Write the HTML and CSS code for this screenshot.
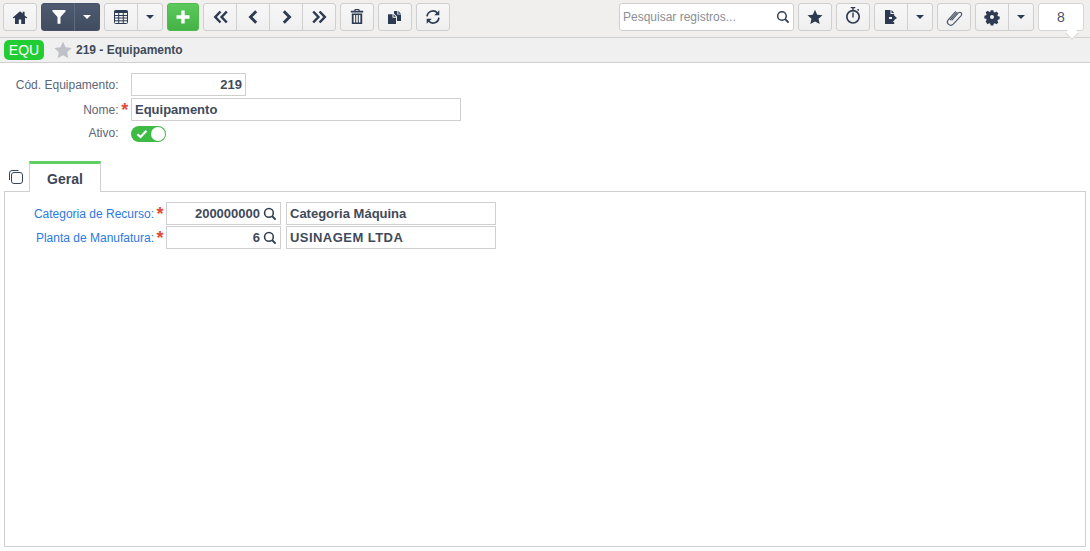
FILE: index.html
```html
<!DOCTYPE html>
<html lang="pt-BR">
<head>
<meta charset="utf-8">
<title>219 - Equipamento</title>
<link rel="stylesheet" href="styles.css">
</head>
<body>
<header class="toolbar">
  <button class="btn"><svg class="ic" viewBox="0 0 16 16"><path d="M8 2.200 0.800 8.600l.9 1 1.300-1.100V15h3.800V10.600h2.400V15H13V8.500l1.300 1.100.9-1L12.600 6.400V2.800h-2v1.800z"/></svg></button>
  <div class="group dark">
    <button class="btn w33"><svg class="ic" viewBox="0 0 16 16"><path class="white" d="M2.500 1h13v1.600L10.500 8v6.800H7.500V8L2.500 2.600z"/></svg></button>
    <button class="btn caret-btn"><span class="caret"></span></button>
  </div>
  <div class="group">
    <button class="btn w33"><svg class="ic" viewBox="0 0 16 16"><rect x="1.500" y="1.500" width="13" height="13" rx="1" fill="none" class="line1"/><path d="M1.500 1.500h13v2.500h-13z"/><path fill="none" class="line1" d="M1.500 6.500h13M1.500 9h13M1.500 11.800h13M5.700 4v10M10.300 4v10"/></svg></button>
    <button class="btn caret-btn"><span class="caret"></span></button>
  </div>
  <button class="btn green"><svg class="ic" viewBox="0 0 16 16"><path class="white" d="M6.300 1.500h3.400v4.800h4.800v3.400H9.700v4.800H6.300V9.700H1.500V6.300h4.800z"/></svg></button>
  <div class="group">
    <button class="btn w33"><svg class="ic" viewBox="0 0 16 16"><path fill="none" class="chev" d="M8.500 2.500 3.300 8l5.200 5.500M14.800 2.500 9.600 8l5.200 5.500"/></svg></button>
    <button class="btn w33"><svg class="ic" viewBox="0 0 16 16"><path fill="none" class="chev3" d="M11.200 2.300 5.500 8l5.700 5.700"/></svg></button>
    <button class="btn w33"><svg class="ic" viewBox="0 0 16 16"><path fill="none" class="chev3" d="M5.800 2.300 11.500 8l-5.700 5.700"/></svg></button>
    <button class="btn w33"><svg class="ic" viewBox="0 0 16 16"><path fill="none" class="chev" d="M2.200 2.500 7.400 8l-5.200 5.500M8.600 2.500 13.800 8l-5.200 5.500"/></svg></button>
  </div>
  <button class="btn"><svg class="ic" viewBox="0 0 16 16"><path fill-rule="evenodd" d="M5.800 0h4.400l.6 1.800h3.400v1.600H1.800V1.800h3.400zM6.700 1l-.2.800h3l-.2-.8zM2.800 4.400h10.400V15H2.800zM4.600 6v7.400h1.600V6zm2.600 0v7.400h1.600V6zm2.600 0v7.400h1.600V6z"/></svg></button>
  <button class="btn"><svg class="ic" viewBox="0 0 16 16"><path d="M1 5.200h4.500v3.600H9V15H1zM6.500 5.200 9 7.800H6.500zM7 2h3.300v3.500h3.700V12h-4V7.500L7 4.500zM11.300 2 14 4.700h-2.700z"/></svg></button>
  <button class="btn"><svg class="ic" viewBox="0 0 16 16"><path fill="none" class="line" d="M2.100 7.400A5.900 5.900 0 0 1 12.400 4M13.900 8.600A5.900 5.900 0 0 1 3.600 12"/><path d="M14.300 1.200v5.100H9.200zM1.700 14.800V9.700h5.100z"/></svg></button>
  <div class="right">
    <div class="search"><span class="search-text">Pesquisar registros...</span><svg class="ic-s" viewBox="0 0 16 16"><circle cx="6.800" cy="6.800" r="4.900" fill="none" stroke="#2f3d52" stroke-width="1.700"/><path d="m10.400 10.400 4 4" stroke="#2f3d52" stroke-width="2.200" fill="none"/></svg></div>
    <button class="btn"><svg class="ic" viewBox="0 0 16 16"><path d="m8 .8 2.200 4.900 5.300.6-4 3.500 1.200 5.300L8 12.400l-4.700 2.700 1.200-5.300-4-3.500 5.300-.6z"/></svg></button>
    <button class="btn"><svg class="ic" viewBox="0 0 16 16"><circle cx="8" cy="7.800" r="6.200" fill="none" class="line2"/><path d="M5.700-2h4.600V-.7H8.700v2H7.300v-2H5.700zM7.300 3.500h1.400v5H7.300zM13 -.3l1.300 1.300-1 1L12 .7z"/></svg></button>
    <div class="group">
      <button class="btn w33"><svg class="ic" viewBox="0 0 16 16"><path fill-rule="evenodd" d="M2 1h5.500v4h3.700v1.500L14 9l-2.800 2v.8l-1.300.8 1.300.9V15H2zM8.500 1l2.700 3H8.500zM6 8v2h3V8z"/></svg></button>
      <button class="btn caret-btn"><span class="caret"></span></button>
    </div>
    <button class="btn"><svg class="ic" viewBox="0 0 16 16"><path fill="none" class="thin" d="M5.600 11.400 12.400 3.800a2 2 0 0 1 3 2.600L7.300 15a3.300 3.300 0 0 1-5.100-4.200L9.800 2.300M3.900 11.100l7.300-8"/></svg></button>
    <div class="group">
      <button class="btn w33"><svg class="ic" viewBox="0 0 16 16"><path fill-rule="evenodd" d="M6.500 1h3l.4 2 1.300.5 1.800-1.100 2.100 2.100-1.100 1.800.5 1.300 2 .4v3l-2 .4-.5 1.300 1.100 1.800-2.100 2.100-1.800-1.100-1.300.5-.4 2h-3l-.4-2-1.300-.5-1.800 1.100L.9 13.500 2 11.700l-.5-1.300-2-.4v-3l2-.4L2 5.300.9 3.500 3 1.400l1.800 1.100L6.100 3zM8 6.300a2.200 2.200 0 1 0 0 4.400 2.200 2.200 0 0 0 0-4.400z" transform="translate(.8 .4) scale(.9)"/></svg></button>
      <button class="btn caret-btn"><span class="caret"></span></button>
    </div>
    <div class="count">8</div>
  </div>
</header>

<div class="crumb">
  <span class="badge">EQU</span>
  <svg class="crumb-star" viewBox="0 0 16 16"><path d="m8 .6 2.300 5 5.400.6-4 3.700 1.100 5.400L8 12.600l-4.800 2.700 1.100-5.400-4-3.700 5.400-.6z"/></svg>
  <span class="crumb-text">219 - Equipamento</span>
</div>

<main class="content">
  <section class="head-form">
    <div class="row">
      <label class="lbl">Cód. Equipamento:</label>
      <span class="mark"></span>
      <div class="input short num">219</div>
    </div>
    <div class="row">
      <label class="lbl">Nome:</label>
      <span class="mark">*</span>
      <div class="input long">Equipamento</div>
    </div>
    <div class="row row-switch">
      <label class="lbl">Ativo:</label>
      <span class="mark"></span>
      <div class="toggle">
        <svg class="check" viewBox="0 0 12 10"><path d="M1.500 5.200 4.500 8 10.500 1.800" fill="none" stroke="#fff" stroke-width="2.200"/></svg>
        <span class="knob"></span>
      </div>
    </div>
  </section>

  <nav class="tabs">
    <svg class="tabs-ic" viewBox="0 0 16 16"><path d="M10.500 1.500H4A2.500 2.500 0 0 0 1.500 4v7" fill="none" stroke="#3a4658" stroke-width="1"/><rect x="3.500" y="3.500" width="11" height="11" rx="2.500" fill="none" stroke="#3a4658" stroke-width="1"/></svg>
    <div class="tab">Geral</div>
  </nav>

  <section class="panel">
    <div class="row">
      <label class="lbl link">Categoria de Recurso:</label>
      <span class="mark">*</span>
      <div class="input short num lookup">200000000<svg class="ic-f" viewBox="0 0 16 16"><circle cx="6.800" cy="6.800" r="5" fill="none" stroke="#2f3d52" stroke-width="1.800"/><path d="m10.400 10.400 4 4" stroke="#2f3d52" stroke-width="2.300" fill="none"/></svg></div>
      <div class="input desc">Categoria Máquina</div>
    </div>
    <div class="row">
      <label class="lbl link">Planta de Manufatura:</label>
      <span class="mark">*</span>
      <div class="input short num lookup">6<svg class="ic-f" viewBox="0 0 16 16"><circle cx="6.800" cy="6.800" r="5" fill="none" stroke="#2f3d52" stroke-width="1.800"/><path d="m10.400 10.400 4 4" stroke="#2f3d52" stroke-width="2.300" fill="none"/></svg></div>
      <div class="input desc caps">USINAGEM LTDA</div>
    </div>
  </section>
</main>
</body>
</html>
```
FILE: styles.css
```css
* { box-sizing: border-box; }
html, body { margin: 0; height: 100%; }
body {
  width: 1090px;
  height: 551px;
  overflow: hidden;
  background: #fff;
  color: #333f50;
  font: 12px "Liberation Sans", Arial, sans-serif;
  display: flex;
  flex-direction: column;
}
.toolbar {
  height: 38px;
  flex: none;
  display: flex;
  gap: 4px;
  padding: 3px 6px 0 3px;
  background: #f0efee;
  border-bottom: 1px solid #cfcfcf;
  align-items: flex-start;
}
.btn {
  width: 34px;
  height: 28px;
  padding: 0;
  margin: 0;
  flex: none;
  display: flex;
  align-items: center;
  justify-content: center;
  background: linear-gradient(#f7f7f7, #efefef);
  border: 1px solid #cfcfcf;
  border-radius: 3px;
}
.ic { width: 16px; height: 16px; fill: #2d3b52; display: block; overflow: visible; }
.ic .line { stroke: #2d3b52; stroke-width: 1.700; }
.ic .line1 { stroke: #2d3b52; stroke-width: 1; }
.ic .line2 { stroke: #2d3b52; stroke-width: 1.700; }
.ic .chev { stroke: #2d3b52; stroke-width: 2.500; }
.ic .chev3 { stroke: #2d3b52; stroke-width: 2.900; }
.ic .thin { stroke: #46536a; stroke-width: 1.100; }
.ic .white { fill: #fff; }
.group { display: flex; flex: none; }
.group .btn { border-radius: 0; margin-left: -1px; }
.group .btn:first-child { margin-left: 0; border-radius: 3px 0 0 3px; }
.group .btn:last-child { border-radius: 0 3px 3px 0; }
.group .w33 { width: 34px; }
.group .caret-btn { width: 26px; }
.caret { width: 0; height: 0; border: 4px solid transparent; border-top-color: #2d3b52; border-bottom: 0; }
.dark .btn { background: linear-gradient(#4d5a70, #414c5f); border-color: #46526a; }
.dark .btn:last-child { border-left-color: #5d6a80; }
.dark .caret { border-top-color: #fff; }
.green { width: 32px; background: linear-gradient(#5cc95c, #44b244); border-color: #4dbb4d; }
.right { margin-left: auto; display: flex; gap: 4px; }
.search {
  width: 175px;
  height: 28px;
  display: flex;
  align-items: center;
  justify-content: space-between;
  padding: 0 3px 0 3px;
  background: #fff;
  border: 1px solid #cfcfcf;
  border-radius: 3px;
}
.search-text { color: #8a8f96; font-size: 12px; }
.ic-s { width: 14px; height: 14px; display: block; }
.count {
  position: relative;
  width: 46px;
  height: 28px;
  display: flex;
  align-items: center;
  justify-content: center;
  background: #fff;
  border: 1px solid #d6d6d6;
  border-radius: 3px;
  font-size: 14px;
  color: #46536a;
}
.count::after {
  content: "";
  position: absolute;
  left: 28px;
  top: 24px;
  width: 9px;
  height: 9px;
  background: #fff;
  border-right: 1px solid #d6d6d6;
  border-bottom: 1px solid #d6d6d6;
  transform: rotate(45deg);
  z-index: 1;
}
.crumb {
  height: 25px;
  flex: none;
  display: flex;
  align-items: center;
  padding: 0 0 0 4px;
  background: #f0f0f0;
  border-bottom: 1px solid #cfcfcf;
}
.badge {
  width: 40px;
  height: 20px;
  display: flex;
  align-items: center;
  justify-content: center;
  background: #22cc33;
  color: #fff;
  border-radius: 5px;
  font-size: 14px;
}
.crumb-star { width: 18px; height: 18px; margin-left: 10px; fill: #bfc1c8; }
.crumb-text { margin-left: 4px; font-weight: 700; color: #3f4a5a; }
.content { flex: 1; display: flex; flex-direction: column; padding: 10px 4px 4px; min-height: 0; }
.head-form { display: flex; flex-direction: column; gap: 2px; }
.row { display: flex; align-items: center; height: 23px; flex: none; }
.row-switch { height: 20px; }
.head-form .lbl { width: 114.500px; }
.head-form .mark { width: 12.500px; }
.lbl { text-align: right; color: #5c6675; font-size: 12px; flex: none; }
.mark { width: 13px; flex: none; color: #e04b3a; font-size: 18px; font-weight: 700; line-height: 14px; height: 14px; text-align: center; }
.input {
  height: 23px;
  border: 1px solid #cfcfcf;
  background: #fff;
  display: flex;
  align-items: center;
  font-size: 13px;
  font-weight: 700;
  padding: 0 3px;
  flex: none;
  color: #3f4a5a;
}
.short { width: 115px; }
.long { width: 330px; }
.num { justify-content: flex-end; }
.desc { width: 210px; margin-left: 5px; }
.caps { letter-spacing: .45px; }
.toggle {
  position: relative;
  width: 35px;
  height: 16px;
  margin-top: 2px;
  background: #3dbb45;
  border-radius: 8px;
  display: flex;
  align-items: center;
  padding-left: 5px;
}
.check { width: 12px; height: 10px; display: block; }
.knob { position: absolute; right: 1px; top: 1px; width: 14px; height: 14px; border-radius: 50%; background: #fff; }
.tabs { display: flex; align-items: flex-end; height: 31px; margin-top: 18px; position: relative; z-index: 1; }
.tabs-ic { width: 16px; height: 16px; margin: 0 5px 7px 4px; display: block; flex: none; }
.tab {
  width: 72px;
  height: 31px;
  background: #fff;
  border: 1px solid #cfcfcf;
  border-top: 3px solid #5fcf63;
  border-bottom: 0;
  display: flex;
  align-items: center;
  justify-content: center;
  font-size: 14px;
  font-weight: 700;
  color: #3a4658;
  padding-top: 2px;
}
.panel { flex: 1; margin-top: -1px; border: 1px solid #cfcfcf; background: #fff; padding: 10px 0 0; display: flex; flex-direction: column; gap: 1px; }
.panel .lbl { width: 149px; }
.link { color: #2a7ae2; }
.panel .mark { width: 12px; }
.ic-f { width: 14px; height: 14px; margin-left: 3px; display: block; flex: none; }
```
